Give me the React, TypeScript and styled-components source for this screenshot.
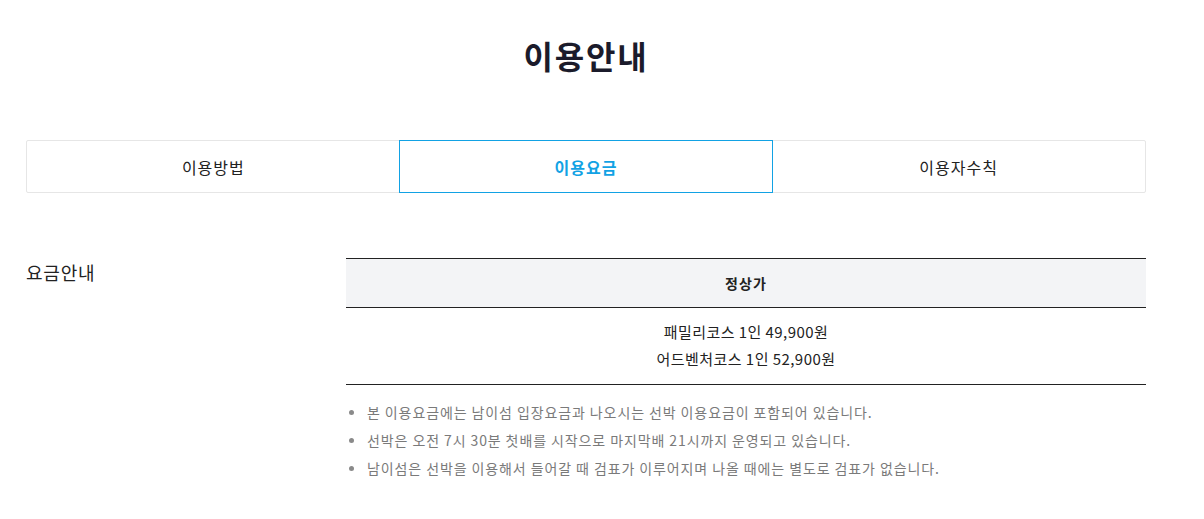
import React, { useState } from 'react'
import styled, { createGlobalStyle } from 'styled-components'

const GlobalStyle = createGlobalStyle`
  * {
    box-sizing: border-box;
  }
  body {
    margin: 0;
    background: #fff;
    font-family: 'Noto Sans CJK KR', 'Noto Sans', sans-serif;
    color: #222;
  }
`

const Page = styled.div`
  width: 1120px;
  margin-left: 26px;
  padding-top: 33px;
`

const Title = styled.h1`
  margin: 0;
  font-size: 32px;
  line-height: 45px;
  font-weight: 700;
  letter-spacing: 1.8px;
  text-align: center;
  color: #1b1b2b;
`

const Tabs = styled.ul`
  list-style: none;
  margin: 62px 0 0;
  padding: 0;
  display: grid;
  grid-template-columns: repeat(3, 1fr);
  border: 1px solid #e6e6e6;
  border-radius: 2px;
`

const Tab = styled.li<{ $active?: boolean }>`
  height: 53px;
  margin: ${(p) => (p.$active ? '-1px -1px' : '-1px 0')};
  display: flex;
  align-items: center;
  justify-content: center;
  font-size: 16px;
  letter-spacing: 1px;
  cursor: pointer;
  border: 1px solid ${(p) => (p.$active ? '#12a2e4' : 'transparent')};
  color: ${(p) => (p.$active ? '#12a2e4' : '#222')};
  font-weight: ${(p) => (p.$active ? 700 : 400)};
`

const Section = styled.section`
  margin-top: 65px;
  display: flex;
`

const Label = styled.h2`
  width: 320px;
  margin: 0;
  font-size: 18px;
  line-height: 29px;
  font-weight: 400;
  letter-spacing: 0.8px;
  color: #222;
`

const Content = styled.div`
  flex: 1;
`

const Table = styled.table`
  width: 100%;
  border-collapse: collapse;
  border-top: 1px solid #222;
  border-bottom: 1px solid #222;
  font-size: 15px;
  color: #222;
`

const Th = styled.th`
  height: 49px;
  background: #f3f4f6;
  border-bottom: 1px solid #222;
  font-size: 14px;
  font-weight: 700;
  letter-spacing: 1.2px;
`

const Td = styled.td`
  padding: 10px 0 12px;
  text-align: center;
  line-height: 27px;
  letter-spacing: 0.45px;
`

const Notes = styled.ul`
  list-style: none;
  margin: 13px 0 0;
  padding: 0;
`

const Note = styled.li`
  position: relative;
  padding-left: 21px;
  font-size: 14px;
  line-height: 28px;
  letter-spacing: 0.9px;
  color: #7a7a7a;

  &::before {
    content: '';
    position: absolute;
    left: 3px;
    top: 12px;
    width: 5px;
    height: 5px;
    border-radius: 50%;
    background: #8a8a8a;
  }
`

const tabs = ['이용방법', '이용요금', '이용자수칙']

const notes = [
  '본 이용요금에는 남이섬 입장요금과 나오시는 선박 이용요금이 포함되어 있습니다.',
  '선박은 오전 7시 30분 첫배를 시작으로 마지막배 21시까지 운영되고 있습니다.',
  '남이섬은 선박을 이용해서 들어갈 때 검표가 이루어지며 나올 때에는 별도로 검표가 없습니다.'
]

export default function App() {
  const [active, setActive] = useState(1)

  return (
    <Page>
      <GlobalStyle />
      <Title>이용안내</Title>
      <Tabs>
        {tabs.map((t, i) => (
          <Tab key={t} $active={i === active} onClick={() => setActive(i)}>
            {t}
          </Tab>
        ))}
      </Tabs>
      <Section>
        <Label>요금안내</Label>
        <Content>
          <Table>
            <thead>
              <tr>
                <Th>정상가</Th>
              </tr>
            </thead>
            <tbody>
              <tr>
                <Td>
                  패밀리코스 1인 49,900원
                  <br />
                  어드벤처코스 1인 52,900원
                </Td>
              </tr>
            </tbody>
          </Table>
          <Notes>
            {notes.map((n) => (
              <Note key={n}>{n}</Note>
            ))}
          </Notes>
        </Content>
      </Section>
    </Page>
  )
}
